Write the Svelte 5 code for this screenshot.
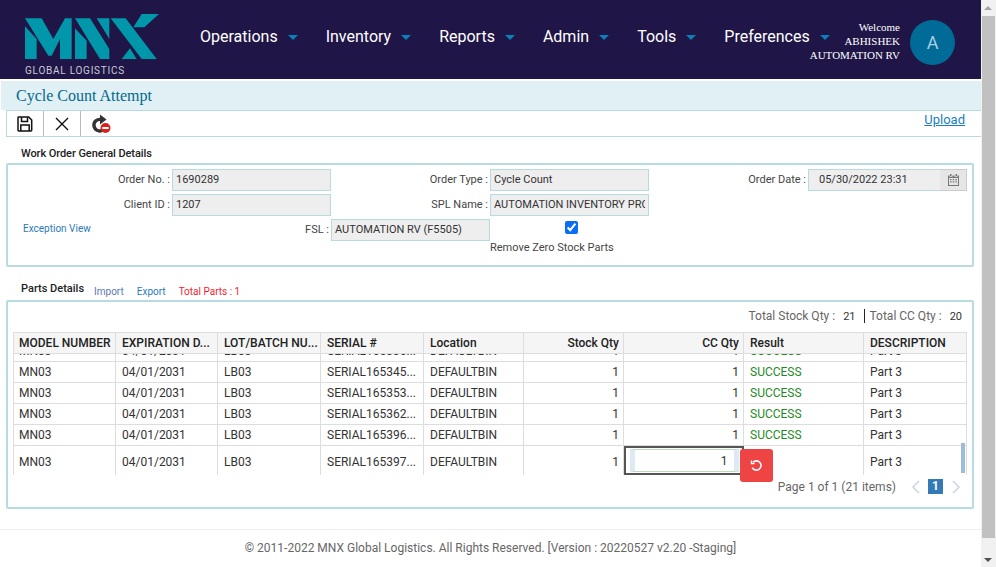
<script>
  // cycle count attempt page
  const menus = ["Operations", "Inventory", "Reports", "Admin", "Tools", "Preferences"];
  const columns = [
    { name: "MODEL NUMBER", key: "model", width: 103 },
    { name: "EXPIRATION D...", key: "expiry", width: 102 },
    { name: "LOT/BATCH NU...", key: "lot", width: 103 },
    { name: "SERIAL #", key: "serial", width: 103 },
    { name: "Location", key: "location", width: 100 },
    { name: "Stock Qty", key: "stock", width: 100, right: true },
    { name: "CC Qty", key: "cc", width: 120, right: true },
    { name: "Result", key: "result", width: 120 },
    { name: "DESCRIPTION", key: "description", width: 103 },
  ];
  const serials = ["SERIAL165336...", "SERIAL165345...", "SERIAL165353...", "SERIAL165362...", "SERIAL165396..."];
  const rows = serials.map((serial) => ({
    model: "MN03",
    expiry: "04/01/2031",
    lot: "LB03",
    serial,
    location: "DEFAULTBIN",
    stock: 1,
    cc: 1,
    result: "SUCCESS",
    description: "Part 3",
  }));
  const gridColumns = columns.map((c) => c.width + "px").join(" ");
</script>

<div class="window">
  <div class="page">
    <header>
      <div class="logo">
        <svg width="134" height="46" viewBox="30 25 402 138">
          <g fill="#0097ab">
            <polygon points="30,62 65,100 65,160 30,160" />
            <polygon points="30,38 80,38 115,100 150,38 170,38 170,160 135,160 135,100 110,150 100,150" />
            <polygon points="180,68 215,105 215,160 180,160" />
            <polygon points="180,38 225,38 283,130 283,160 255,160" />
            <polygon points="245,38 283,38 283,100" />
            <polygon points="287,38 332,38 425,160 380,160" />
            <polygon points="380,25 432,25 388,65 355,65" />
            <polygon points="320,160 345,128 365,160" />
          </g>
        </svg>
        <span>GLOBAL LOGISTICS</span>
      </div>
      <nav>
        {#each menus as menu}
          <a href="#top">{menu}<i class="caret"></i></a>
        {/each}
      </nav>
      <div class="user">
        <div class="names">
          <div>Welcome</div>
          <div>ABHISHEK</div>
          <div>AUTOMATION RV</div>
        </div>
        <div class="avatar">A</div>
      </div>
    </header>

    <div class="title">Cycle Count Attempt</div>

    <div class="toolbar">
      <button aria-label="Save">
        <svg width="16" height="16" viewBox="0 0 16 16" fill="none" stroke="#111" stroke-width="1.5">
          <path d="M1.5 1h10.2l3 3v10.3a.7.7 0 0 1-.7.7H1.7a.7.7 0 0 1-.7-.7V1.7a.7.7 0 0 1 .5-.7z" />
          <path d="M4.5 1.2v4.3h6V1.2M3.8 15V9h8.4v6" />
        </svg>
      </button>
      <button aria-label="Close">
        <svg width="14" height="14" viewBox="0 0 14 14" stroke="#111" stroke-width="1.4">
          <path d="M1 1l12 12M13 1L1 13" />
        </svg>
      </button>
      <button class="cancel" aria-label="Cancel">
        <svg width="20" height="20" viewBox="0 0 20 20">
          <path d="M10 5.5a5.8 5.8 0 1 0 1 11" fill="none" stroke="#333" stroke-width="3.4" />
          <path d="M9 0.5l6.5 5L9 10.5z" fill="#333" />
          <circle cx="14.5" cy="14" r="5" fill="#d9211c" />
          <rect x="11.3" y="13" width="6.4" height="2" fill="#fff" />
        </svg>
      </button>
      <a class="upload" href="#top">Upload</a>
    </div>

    <h4 class="general-title">Work Order General Details</h4>
    <section class="general">
      <label for="order-no">Order No. :</label>
      <input id="order-no" value="1690289" readonly />
      <label for="order-type">Order Type :</label>
      <input id="order-type" value="Cycle Count" readonly />
      <label for="order-date">Order Date :</label>
      <div class="date">
        <input id="order-date" value="05/30/2022 23:31" readonly />
        <span class="calendar">
          <svg width="11" height="12" viewBox="0 0 11 12" fill="#777">
            <path d="M2 0h1.5v2H2zM7.5 0H9v2H7.5zM0 1.5h1.5v1.2h3V1.5h2v1.2h3V1.5H11V12H0zM1 4v7h9V4z" />
            <path d="M2 5h1.5v1.2H2zM4.7 5h1.5v1.2H4.7zM7.4 5h1.5v1.2H7.4zM2 7.2h1.5v1.2H2zM4.7 7.2h1.5v1.2H4.7zM7.4 7.2h1.5v1.2H7.4z" />
          </svg>
        </span>
      </div>

      <label for="client-id">Client ID :</label>
      <input id="client-id" value="1207" readonly />
      <label for="spl-name">SPL Name :</label>
      <input id="spl-name" value="AUTOMATION INVENTORY PROCESS" readonly />

      <a class="exception" href="#top">Exception View</a>
      <label for="fsl">FSL :</label>
      <input id="fsl" value="AUTOMATION RV (F5505)" readonly />
      <div class="zero">
        <input id="zero" type="checkbox" checked />
        <label for="zero">Remove Zero Stock Parts</label>
      </div>
    </section>

    <div class="parts-title">
      <h4>Parts Details</h4>
      <a class="import" href="#top">Import</a>
      <a href="#top">Export</a>
      <span class="total">Total Parts : 1</span>
    </div>

    <section class="parts">
      <div class="totals">
        <span>Total Stock Qty :</span><b>21</b><i></i><span>Total CC Qty :</span><b>20</b>
      </div>
      <div class="grid">
        <div class="row head" style="grid-template-columns: {gridColumns}">
          {#each columns as col}
            <div class="cell" class:right={col.right}>{col.name}</div>
          {/each}
        </div>
        <div class="body">
          {#each rows as row}
            <div class="row" style="grid-template-columns: {gridColumns}">
              {#each columns as col}
                <div class="cell" class:right={col.right} class:success={col.key === "result"}>{row[col.key]}</div>
              {/each}
            </div>
          {/each}
          <div class="row edit" style="grid-template-columns: {gridColumns}">
            <div class="cell">MN03</div>
            <div class="cell">04/01/2031</div>
            <div class="cell">LB03</div>
            <div class="cell">SERIAL165397...</div>
            <div class="cell">DEFAULTBIN</div>
            <div class="cell right">1</div>
            <div class="cell editing"><input value="1" aria-label="CC Qty" /></div>
            <div class="cell"></div>
            <div class="cell">Part 3</div>
          </div>
          <span class="thumb"></span>
        </div>
        <button class="revert" aria-label="Revert">
          <svg width="13" height="13" viewBox="0 0 14 14" fill="none" stroke="#fff" stroke-width="1.7">
            <path d="M3.2 3.6a5 5 0 1 1-.8 5.6" />
            <path d="M1.6 1.6v3.4h3.4" stroke-width="1.5" />
          </svg>
        </button>
      </div>
      <div class="pager">
        <span>Page 1 of 1 (21 items)</span>
        <svg class="arrow" width="10" height="14" viewBox="0 0 10 14" fill="none" stroke="#c5d6e6" stroke-width="1.5"><path d="M8 1L2 7l6 6" /></svg>
        <span class="current">1</span>
        <svg class="arrow" width="10" height="14" viewBox="0 0 10 14" fill="none" stroke="#c5d6e6" stroke-width="1.5"><path d="M2 1l6 6-6 6" /></svg>
      </div>
    </section>

    <footer>© 2011-2022 MNX Global Logistics. All Rights Reserved. [Version : 20220527 v2.20 -Staging]</footer>
  </div>

  <div class="scrollbar">
    <span class="up"></span>
    <span class="bar"></span>
    <span class="down"></span>
  </div>
</div>

<style>
  :global(body) {
    margin: 0;
    background: #fff;
    overflow: hidden;
  }

  .window {
    display: flex;
    width: 996px;
    height: 567px;
    font-family: Roboto, sans-serif;
    font-size: 12px;
    color: #333;
  }

  .page {
    width: 981px;
    flex: none;
  }

  header {
    display: flex;
    align-items: center;
    height: 79px;
    background: #1f1547;
    color: #fff;
  }

  .logo {
    width: 134px;
    margin: 11px 0 0 25px;
    flex: none;
  }

  .logo svg {
    display: block;
  }

  .logo span {
    display: block;
    margin-top: 5px;
    font-size: 10px;
    letter-spacing: 0.75px;
    line-height: 12px;
    color: #c9ccd6;
  }

  nav {
    display: flex;
    margin: -7px -40px 0 41px;
    flex: none;
  }

  nav a {
    display: flex;
    align-items: center;
    margin-right: 28px;
    font-size: 16px;
    color: #fff;
    text-decoration: none;
  }

  nav a:last-child {
    margin-right: 0;
  }

  .caret {
    width: 0;
    height: 0;
    margin: 3px 0 0 10px;
    border-left: 5px solid transparent;
    border-right: 5px solid transparent;
    border-top: 5px solid #0a7fb8;
  }

  .user {
    display: flex;
    align-items: center;
    margin-left: auto;
    margin-right: 26px;
  }

  .names {
    margin: 2px 10px 0 0;
    font-family: "Liberation Serif", serif;
    font-size: 11px;
    line-height: 14px;
    text-align: right;
    white-space: nowrap;
  }

  .avatar {
    display: flex;
    flex: none;
    align-items: center;
    justify-content: center;
    width: 45px;
    height: 45px;
    margin-top: 6px;
    border-radius: 50%;
    background: #006b96;
    color: #a9cfe6;
    font-size: 18px;
  }

  .title {
    height: 29px;
    margin: 2px 0 0 1px;
    padding-left: 15px;
    background: #e0f0f4;
    font-family: "Liberation Serif", serif;
    font-size: 16px;
    line-height: 29px;
    color: #00698f;
  }

  .toolbar {
    display: flex;
    align-items: stretch;
    height: 25px;
    margin-left: 6px;
    border: 1px solid #b7dbe1;
    border-width: 1px 0 1px 1px;
  }

  .toolbar button {
    display: flex;
    align-items: center;
    justify-content: center;
    width: 37px;
    padding: 0;
    border: 0;
    border-right: 1px solid #bbb;
    background: #fff;
  }

  .toolbar .cancel {
    border-right: 0;
    padding-left: 2px;
  }

  .upload {
    margin: 1px 16px 0 auto;
    font-size: 13px;
    line-height: 16px;
    color: #1a7ec2;
  }

  h4 {
    margin: 0;
    font-size: 11px;
    font-weight: 500;
    color: #222;
  }

  .general-title {
    margin: 10px 0 3px 21px;
    line-height: 13px;
    letter-spacing: -0.07px;
  }

  .general {
    display: grid;
    grid-template-columns: repeat(6, 159px);
    grid-auto-rows: 25px;
    align-items: start;
    width: 954px;
    height: 96px;
    margin-left: 6px;
    padding: 4px 5px 0;
    border: 2px solid #b7dbe1;
    border-radius: 2px;
  }

  .general label {
    padding-right: 2px;
    font-size: 11px;
    line-height: 21px;
    color: #444;
    text-align: right;
  }

  .general input[id] {
    box-sizing: border-box;
    width: 159px;
    height: 22px;
    padding: 0 3px 1px;
    border: 1px solid #b7dbe1;
    background: #eee;
    font: 11px Roboto, sans-serif;
    color: #333;
    outline: 0;
  }

  .date {
    display: flex;
    width: 159px;
    height: 22px;
  }

  .general .date input {
    flex: 1;
    min-width: 0;
    width: auto;
    padding-left: 10px;
    border-right: 0;
  }

  .calendar {
    display: flex;
    align-items: center;
    justify-content: center;
    width: 27px;
    box-sizing: border-box;
    border: 1px solid #ccc;
    border-left: 0;
    background: #e6e6e6;
  }

  .exception {
    grid-column: 1;
    padding-left: 10px;
    font-size: 10px;
    line-height: 20px;
    color: #2a7bb8;
    text-decoration: none;
  }

  .zero {
    height: 36px;
  }

  .general .zero input {
    display: block;
    width: 13px;
    height: 13px;
    margin: 2px 0 0 75px;
    accent-color: #0a6ef5;
  }

  .general .zero label {
    display: block;
    margin-top: 7px;
    padding: 0;
    line-height: 14px;
    text-align: left;
    white-space: nowrap;
  }

  .parts-title {
    display: flex;
    align-items: flex-start;
    margin: 15px 0 2px 21px;
    font-size: 10px;
    line-height: 13px;
  }

  .parts-title a {
    margin: 3px 3px 0 10px;
    color: #2a7bb8;
    text-decoration: none;
  }

  .parts-title .import {
    color: #5b78b5;
  }

  .total {
    margin: 3px 0 0 10px;
    color: #f21d2f;
  }

  .parts {
    position: relative;
    width: 954px;
    height: 205px;
    margin-left: 6px;
    padding: 0 5px;
    border: 2px solid #b7dbe1;
    border-radius: 2px;
  }

  .totals {
    display: flex;
    justify-content: flex-end;
    align-items: center;
    box-sizing: border-box;
    height: 30px;
    padding: 0 5px 2px 0;
    color: #666;
  }

  .totals b {
    margin-left: 8px;
    font-weight: 400;
    font-size: 11px;
    color: #333;
  }

  .totals i {
    width: 1px;
    height: 14px;
    margin: 0 5px 0 8px;
    background: #222;
  }

  .grid {
    position: relative;
    height: 145px;
  }

  .row {
    display: grid;
    border-top: 1px solid #ddd;
    box-sizing: border-box;
    height: 21px;
  }

  .head {
    height: 22px;
    background: #f5f5f5;
    border-bottom: 1px solid #ddd;
    font-weight: 500;
    color: #222;
  }

  .body {
    position: relative;
    height: 121px;
    overflow: hidden;
  }

  .body .row:first-child {
    margin-top: -14px;
  }

  .cell {
    padding: 0 4px 0 6px;
    border-right: 1px solid #ddd;
    line-height: 21px;
    white-space: nowrap;
    overflow: hidden;
    color: #333;
  }

  .head .cell {
    line-height: 20px;
    color: #222;
  }

  .row .cell:first-child {
    padding-left: 5px;
    border-left: 1px solid #ddd;
  }

  .right {
    text-align: right;
  }

  .success {
    color: #1f8a1f;
  }

  .edit {
    height: 30px;
  }

  .edit .cell {
    padding-top: 2px;
    line-height: 29px;
  }

  .edit .editing {
    display: flex;
    align-items: center;
    justify-content: center;
    box-sizing: border-box;
    height: 29px;
    padding: 0;
    border: 2px solid #555;
    overflow: visible;
  }

  .editing input {
    box-sizing: border-box;
    width: 109px;
    height: 23px;
    padding: 0 6px;
    border: 1px solid #b9dcb9;
    border-left: 5px solid #dfe9f5;
    border-right: 5px solid #dfe9f5;
    text-align: right;
    font: 12px Roboto, sans-serif;
    color: #333;
    outline: 0;
  }

  .thumb {
    position: absolute;
    top: 89px;
    right: 2px;
    width: 4px;
    height: 30px;
    background: #9dbcda;
  }

  .revert {
    position: absolute;
    left: 727px;
    top: 117px;
    display: flex;
    align-items: center;
    justify-content: center;
    width: 33px;
    height: 33px;
    padding: 0;
    border: 0;
    border-radius: 3px;
    background: #ee4444;
  }

  .pager {
    position: absolute;
    right: 11px;
    bottom: 13px;
    display: flex;
    align-items: center;
    color: #666;
  }

  .arrow {
    margin: 0 7px 0 15px;
  }

  .pager .arrow:last-child {
    margin: 0 0 0 8px;
  }

  .current {
    width: 15px;
    height: 15px;
    background: #337ab7;
    color: #fff;
    font-weight: 700;
    line-height: 15px;
    text-align: center;
  }

  footer {
    height: 37px;
    margin-top: 20px;
    border-top: 1px solid #eee;
    line-height: 37px;
    text-align: center;
    color: #666;
  }

  .scrollbar {
    display: flex;
    flex-direction: column;
    width: 15px;
    flex: none;
    background: #f1f1f1;
  }

  .up,
  .down {
    position: relative;
    height: 16px;
    flex: none;
  }

  .up::after,
  .down::after {
    content: "";
    position: absolute;
    left: 3px;
    width: 0;
    height: 0;
    border-left: 4px solid transparent;
    border-right: 4px solid transparent;
  }

  .up::after {
    top: 6px;
    border-bottom: 4px solid #a3a3a3;
  }

  .down::after {
    top: 7px;
    border-top: 4px solid #505050;
  }

  .bar {
    height: 522px;
    margin: 0 1px 13px 1px;
    background: #c1c1c1;
  }
</style>
